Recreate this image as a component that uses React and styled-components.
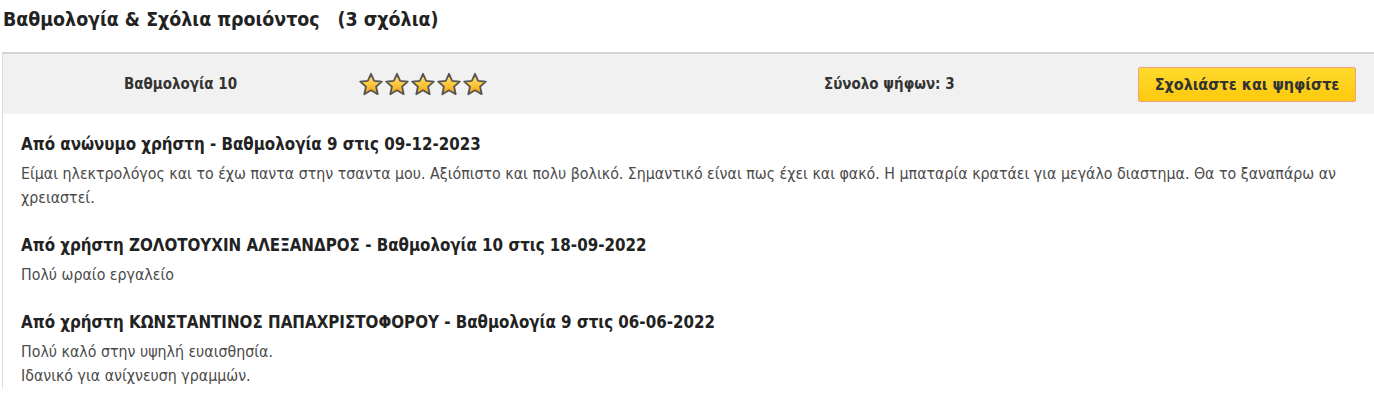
import React from 'react';
import styled, { createGlobalStyle } from 'styled-components';

const GlobalStyle = createGlobalStyle`
  html, body {
    margin: 0;
    padding: 0;
    background: #ffffff;
  }
  body {
    font-family: "DejaVu Sans Condensed", "DejaVu Sans", sans-serif;
    color: #333;
  }
`;

const Page = styled.div`
  width: 1374px;
  overflow: hidden;
`;

const Title = styled.h2`
  margin: 0;
  padding: 9px 0 0 3px;
  height: 52px;
  box-sizing: border-box;
  font-size: 19.4px;
  line-height: 22px;
  font-weight: bold;
  color: #222;
  span {
    margin-left: 18px;
  }
`;

const Panel = styled.div`
  margin-left: 2px;
  border-top: 2px solid #d4d4d4;
  border-left: 1px solid #dcdcdc;
  width: 1400px;
`;

const SummaryBar = styled.div`
  display: flex;
  align-items: center;
  height: 60px;
  background: #f1f1f1;
  font-size: 15px;
  font-weight: bold;
  color: #333;
`;

const SummaryCell = styled.div`
  width: ${(props) => props.width}px;
  padding-left: ${(props) => props.pad || 0}px;
  box-sizing: border-box;
  display: flex;
  align-items: center;
`;

const Stars = styled.div`
  display: flex;
`;

const VoteButton = styled.button`
  font-family: inherit;
  font-size: 16px;
  font-weight: bold;
  color: #333;
  height: 35px;
  width: 218px;
  padding: 0;
  border: 1px solid #f2a27e;
  border-radius: 2px;
  background: linear-gradient(#ffda2e, #fdc90c);
  cursor: pointer;
`;

const Reviews = styled.div`
  padding: 19px 0 0 18px;
`;

const Review = styled.div`
  margin-bottom: 24px;
`;

const ReviewHead = styled.div`
  font-size: 16.8px;
  font-weight: bold;
  color: #222;
  line-height: 22px;
  margin-bottom: 7px;
`;

const ReviewBody = styled.div`
  font-size: 15.8px;
  color: #4a4a4a;
  line-height: 24px;
  white-space: pre-line;
`;

function Star() {
  return (
    <svg width="26" height="25" viewBox="0 0 26 25">
      <defs>
        <linearGradient id="starFill" x1="0" y1="0" x2="0" y2="1">
          <stop offset="0" stopColor="#ffe37a" />
          <stop offset="0.5" stopColor="#fcc73c" />
          <stop offset="1" stopColor="#f2a416" />
        </linearGradient>
      </defs>
      <path
        d="M13 1.8 L16.2 8.8 L23.8 9.6 L18.1 14.7 L19.7 22.2 L13 18.3 L6.3 22.2 L7.9 14.7 L2.2 9.6 L9.8 8.8 Z"
        fill="url(#starFill)"
        stroke="#555"
        strokeWidth="1.8"
        strokeLinejoin="round"
      />
    </svg>
  );
}

const reviews = [
  {
    head: 'Από ανώνυμο χρήστη - Βαθμολογία 9 στις 09-12-2023',
    body: 'Είμαι ηλεκτρολόγος και το έχω παντα στην τσαντα μου. Αξιόπιστο και πολυ βολικό. Σημαντικό είναι πως έχει και φακό. Η μπαταρία κρατάει για μεγάλο διαστημα. Θα το ξαναπάρω αν χρειαστεί.',
  },
  {
    head: 'Από χρήστη ΖΟΛΟΤΟΥΧΙΝ ΑΛΕΞΑΝΔΡΟΣ - Βαθμολογία 10 στις 18-09-2022',
    body: 'Πολύ ωραίο εργαλείο',
  },
  {
    head: 'Από χρήστη ΚΩΝΣΤΑΝΤΙΝΟΣ ΠΑΠΑΧΡΙΣΤΟΦΟΡΟΥ - Βαθμολογία 9 στις 06-06-2022',
    body: 'Πολύ καλό στην υψηλή ευαισθησία.\nΙδανικό για ανίχνευση γραμμών.',
  },
];

export default function App() {
  return (
    <Page>
      <GlobalStyle />
      <Title>
        Βαθμολογία &amp; Σχόλια προιόντος<span>(3 σχόλια)</span>
      </Title>
      <Panel>
        <SummaryBar>
          <SummaryCell width={355} pad={121}>Βαθμολογία 10</SummaryCell>
          <SummaryCell width={466}>
            <Stars>
              {[0, 1, 2, 3, 4].map((i) => (
                <Star key={i} />
              ))}
            </Stars>
          </SummaryCell>
          <SummaryCell width={314}>Σύνολο ψήφων: 3</SummaryCell>
          <SummaryCell width={240}>
            <VoteButton>Σχολιάστε και ψηφίστε</VoteButton>
          </SummaryCell>
        </SummaryBar>
        <Reviews>
          {reviews.map((r) => (
            <Review key={r.head}>
              <ReviewHead>{r.head}</ReviewHead>
              <ReviewBody>{r.body}</ReviewBody>
            </Review>
          ))}
        </Reviews>
      </Panel>
    </Page>
  );
}
